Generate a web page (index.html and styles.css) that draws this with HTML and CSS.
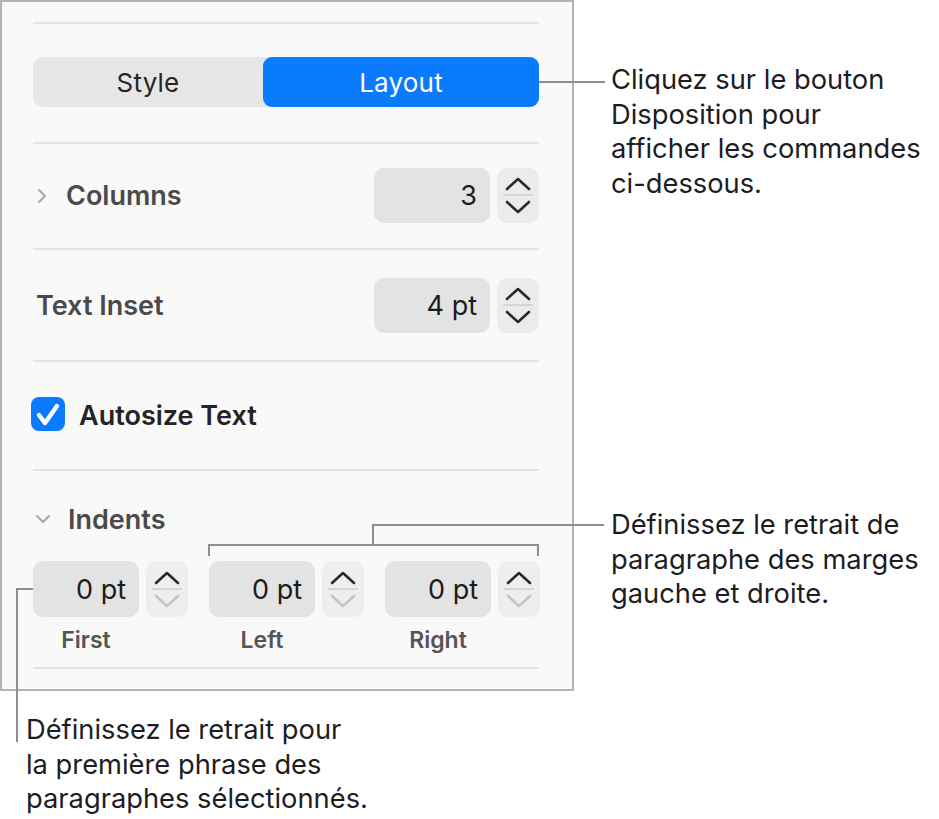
FILE: index.html
```html
<!DOCTYPE html>
<html lang="fr">
<head>
<meta charset="utf-8">
<title>Layout inspector</title>
<link rel="stylesheet" href="styles.css">
</head>
<body>
<div class="stage">
  <section class="inspector">
    <div class="sep first-sep"></div>
    <div class="segmented">
      <div class="seg">Style</div>
      <div class="seg active">Layout</div>
    </div>
    <div class="sep sep-seg"></div>

    <div class="row row-columns">
      <div class="row-label">
        <svg class="chev-right" width="10" height="16" viewBox="0 0 10 16"><polyline points="2,2 8,8 2,14" fill="none" stroke="#a6a6a6" stroke-width="2" stroke-linecap="round" stroke-linejoin="round"/></svg>
        <span class="label">Columns</span>
      </div>
      <div class="spin">
        <div class="field">3</div>
        <div class="stepper">
          <svg width="26" height="15" viewBox="0 0 26 15"><polyline points="2,13 13,3 24,13" fill="none" stroke="#2a2a2a" stroke-width="2.6" stroke-linecap="round" stroke-linejoin="round"/></svg>
          <div class="step-line"></div>
          <svg width="26" height="15" viewBox="0 0 26 15"><polyline points="2,2 13,12 24,2" fill="none" stroke="#2a2a2a" stroke-width="2.6" stroke-linecap="round" stroke-linejoin="round"/></svg>
        </div>
      </div>
    </div>
    <div class="sep sep-col"></div>

    <div class="row row-inset">
      <span class="label label-inset">Text Inset</span>
      <div class="spin">
        <div class="field">4 pt</div>
        <div class="stepper">
          <svg width="26" height="15" viewBox="0 0 26 15"><polyline points="2,13 13,3 24,13" fill="none" stroke="#2a2a2a" stroke-width="2.6" stroke-linecap="round" stroke-linejoin="round"/></svg>
          <div class="step-line"></div>
          <svg width="26" height="15" viewBox="0 0 26 15"><polyline points="2,2 13,12 24,2" fill="none" stroke="#2a2a2a" stroke-width="2.6" stroke-linecap="round" stroke-linejoin="round"/></svg>
        </div>
      </div>
    </div>
    <div class="sep sep-inset"></div>

    <div class="row row-check">
      <div class="checkbox">
        <svg width="34" height="34" viewBox="0 0 34 34"><polyline points="8,18 14,26 26,9" fill="none" stroke="#ffffff" stroke-width="4.4" stroke-linecap="round" stroke-linejoin="round"/></svg>
      </div>
      <span class="label label-check">Autosize Text</span>
    </div>
    <div class="sep sep-check"></div>

    <div class="indent-head">
      <svg class="chev-down" width="16" height="10" viewBox="0 0 16 10"><polyline points="2,2 8,8 14,2" fill="none" stroke="#a6a6a6" stroke-width="2" stroke-linecap="round" stroke-linejoin="round"/></svg>
      <span class="label">Indents</span>
    </div>

    <div class="indents">
      <div class="indent">
        <div class="spin small">
          <div class="field">0 pt</div>
          <div class="stepper light">
            <svg width="26" height="15" viewBox="0 0 26 15"><polyline points="2,13 13,3 24,13" fill="none" stroke="#2a2a2a" stroke-width="2.6" stroke-linecap="round" stroke-linejoin="round"/></svg>
            <div class="step-line"></div>
            <svg width="26" height="15" viewBox="0 0 26 15"><polyline points="2,2 13,12 24,2" fill="none" stroke="#c4c4c4" stroke-width="2.6" stroke-linecap="round" stroke-linejoin="round"/></svg>
          </div>
        </div>
        <div class="sub-label">First</div>
      </div>
      <div class="indent">
        <div class="spin small">
          <div class="field">0 pt</div>
          <div class="stepper light">
            <svg width="26" height="15" viewBox="0 0 26 15"><polyline points="2,13 13,3 24,13" fill="none" stroke="#2a2a2a" stroke-width="2.6" stroke-linecap="round" stroke-linejoin="round"/></svg>
            <div class="step-line"></div>
            <svg width="26" height="15" viewBox="0 0 26 15"><polyline points="2,2 13,12 24,2" fill="none" stroke="#c4c4c4" stroke-width="2.6" stroke-linecap="round" stroke-linejoin="round"/></svg>
          </div>
        </div>
        <div class="sub-label">Left</div>
      </div>
      <div class="indent">
        <div class="spin small">
          <div class="field">0 pt</div>
          <div class="stepper light">
            <svg width="26" height="15" viewBox="0 0 26 15"><polyline points="2,13 13,3 24,13" fill="none" stroke="#2a2a2a" stroke-width="2.6" stroke-linecap="round" stroke-linejoin="round"/></svg>
            <div class="step-line"></div>
            <svg width="26" height="15" viewBox="0 0 26 15"><polyline points="2,2 13,12 24,2" fill="none" stroke="#c4c4c4" stroke-width="2.6" stroke-linecap="round" stroke-linejoin="round"/></svg>
          </div>
        </div>
        <div class="sub-label">Right</div>
      </div>
    </div>
    <div class="sep sep-last"></div>
  </section>

  <!-- callout: Layout button -->
  <div class="line line-layout"></div>
  <p class="note note-layout">Cliquez sur le bouton<br>Disposition pour<br>afficher les commandes<br>ci-dessous.</p>

  <!-- callout: left / right indents -->
  <div class="bracket"></div>
  <div class="line line-bracket-v"></div>
  <div class="line line-bracket-h"></div>
  <p class="note note-indents">Définissez le retrait de<br>paragraphe des marges<br>gauche et droite.</p>

  <!-- callout: first indent -->
  <div class="line line-first-h"></div>
  <div class="line line-first-v"></div>
  <p class="note note-first">Définissez le retrait pour<br>la première phrase des<br>paragraphes sélectionnés.</p>
</div>
</body>
</html>
```

FILE: styles.css
```css
* { box-sizing: border-box; }

html, body {
  margin: 0;
  padding: 0;
  background: #ffffff;
}

body {
  font-family: Inter, "Noto Sans", "Liberation Sans", sans-serif;
  color: #1d1d1f;
}

.stage {
  position: relative;
  width: 939px;
  height: 819px;
}

/* ---------- inspector panel ---------- */
.inspector {
  width: 574px;
  height: 691px;
  background: #f9f9f9;
  border: 2px solid #b3b3b3;
  padding: 20px 33px 0 31px;
  display: flex;
  flex-direction: column;
}

.sep {
  height: 2px;
  background: #e4e4e4;
  flex: none;
}

.sep-seg { margin-top: 35px; }
.sep-col { margin-top: 25px; }
.sep-inset { margin-top: 27px; }
.sep-check { margin-top: 38px; }
.sep-last { margin-top: 14px; }

.segmented {
  margin-top: 33px;
  height: 50px;
  display: grid;
  grid-template-columns: 230px 1fr;
  background: #e6e6e6;
  border-radius: 10px;
}

.seg {
  display: flex;
  align-items: center;
  justify-content: center;
  font-size: 26px;
  color: #262626;
  letter-spacing: 0.2px;
}

.seg.active {
  background: #0a7aff;
  color: #ffffff;
  border-radius: 9px;
}

.row {
  display: flex;
  align-items: center;
  justify-content: space-between;
  flex: none;
}

.row-columns { margin-top: 24px; }
.row-inset { margin-top: 28px; }

.row-label {
  display: flex;
  align-items: center;
}

.chev-right {
  margin-left: 4px;
  margin-right: 19px;
}

.label {
  font-size: 27px;
  font-weight: 600;
  color: #4a4a4a;
}

.label-inset { margin-left: 3px; }

.spin {
  display: flex;
  gap: 7px;
  height: 55px;
}

.field {
  width: 116px;
  height: 100%;
  background: #e3e3e3;
  border-radius: 10px;
  display: flex;
  align-items: center;
  justify-content: flex-end;
  padding-right: 13px;
  font-size: 27px;
  color: #1c1c1c;
}

.stepper {
  width: 42px;
  height: 100%;
  background: #ebebeb;
  border-radius: 10px;
  display: flex;
  flex-direction: column;
  align-items: center;
  justify-content: center;
}

.stepper.light { background: #eeeeee; }

.step-line {
  width: 30px;
  height: 2px;
  background: #d6d6d6;
  margin: 3px 0 4px;
}

.row-check {
  margin-top: 35px;
  height: 34px;
  justify-content: flex-start;
}

.checkbox {
  width: 34px;
  height: 34px;
  border-radius: 8px;
  background: #0a7aff;
  margin-left: -2px;
  margin-right: 14px;
}

.checkbox svg { display: block; }

.label-check { color: #242424; padding-top: 3px; }

.indent-head {
  margin-top: 33px;
  height: 30px;
  display: flex;
  align-items: center;
  flex: none;
}

.chev-down {
  margin-left: 2px;
  margin-right: 17px;
}

.indents {
  margin-top: 27px;
  display: flex;
  gap: 21px;
  flex: none;
}

.indent {
  display: flex;
  flex-direction: column;
}

.spin.small { height: 56px; }
.spin.small .field { width: 106px; }

.sub-label {
  width: 106px;
  margin-top: 10px;
  height: 26px;
  line-height: 26px;
  text-align: center;
  font-size: 23px;
  font-weight: 600;
  color: #555555;
}

/* ---------- callouts ---------- */
.line {
  position: absolute;
  background: #8e8e8e;
}

.line-layout { left: 539px; top: 81px; width: 66px; height: 2px; }

.bracket {
  position: absolute;
  left: 208px;
  top: 544px;
  width: 331px;
  height: 12px;
  border: 2px solid #8e8e8e;
  border-bottom: none;
}

.line-bracket-v { left: 372px; top: 524px; width: 2px; height: 21px; }
.line-bracket-h { left: 372px; top: 524px; width: 232px; height: 2px; }

.line-first-h { left: 16px; top: 588px; width: 17px; height: 2px; }
.line-first-v { left: 16px; top: 588px; width: 2px; height: 154px; }

.note {
  position: absolute;
  margin: 0;
  font-size: 27.3px;
  line-height: 34.5px;
  color: #1d1d1f;
  white-space: nowrap;
}

.note-layout { left: 611px; top: 63px; }
.note-indents { left: 611px; top: 508px; }
.note-first { left: 26px; top: 713px; }
```
